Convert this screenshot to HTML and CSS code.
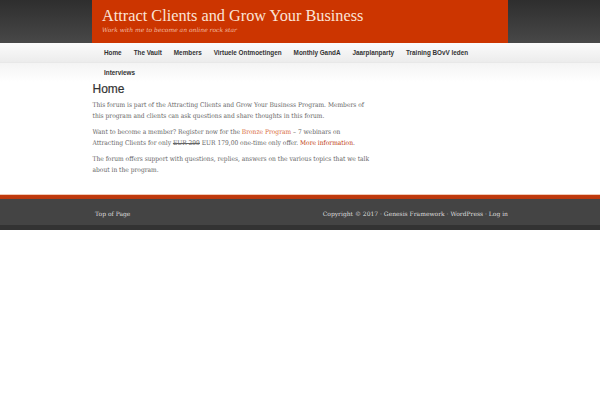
FILE: index.html
```html
<!DOCTYPE html>
<html lang="en">
<head>
    <meta charset="UTF-8">
    <meta name="viewport" content="width=device-width, initial-scale=1.0">
    <title>Home - Attract Clients and Grow Your Business</title>
    <link rel="stylesheet" href="styles.css">
</head>
<body>
    <header class="site-header">
        <div class="wrap title-area">
            <p class="site-title">Attract Clients and Grow Your Business</p>
            <p class="site-description">Work with me to become an online rock star</p>
        </div>
    </header>

    <nav class="nav-primary">
        <ul class="wrap menu">
            <li><a href="#">Home</a></li>
            <li><a href="#">The Vault</a></li>
            <li><a href="#">Members</a></li>
            <li><a href="#">Virtuele Ontmoetingen</a></li>
            <li><a href="#">Monthly GandA</a></li>
            <li><a href="#">Jaarplanparty</a></li>
            <li><a href="#">Training BOvV leden</a></li>
            <li><a href="#">Interviews</a></li>
        </ul>
    </nav>

    <main class="wrap content">
        <article class="entry">
            <h1 class="entry-title">Home</h1>
            <p>This forum is part of the Attracting Clients and Grow Your Business Program. Members of this program and clients can ask questions and share thoughts in this forum.</p>
            <p>Want to become a member? Register now for the <a href="#" class="light">Bronze Program</a> &ndash; 7 webinars on Attracting Clients for only <del>EUR 299</del> EUR 179,00 one-time only offer. <a href="#">More information</a>.</p>
            <p>The forum offers support with questions, replies, answers on the various topics that we talk about in the program.</p>
        </article>
    </main>

    <footer class="site-footer">
        <div class="wrap footer-row">
            <a href="#">Top of Page</a>
            <span>Copyright &copy; 2017 &middot; <a href="#">Genesis Framework</a> &middot; <a href="#">WordPress</a> &middot; <a href="#">Log in</a></span>
        </div>
    </footer>
</body>
</html>
```

FILE: styles.css
```css
/* Reset some default styles */
body, h1, p, ul, li {
    margin: 0;
    padding: 0;
}

body {
    font-family: "DejaVu Serif", serif;
    background-color: #fff;
    color: #555;
}

a {
    text-decoration: none;
}

.wrap {
    width: 416px;
    margin: 0 auto;
}

/* Header */
.site-header {
    background: linear-gradient(#2e2e2e, #484848);
    height: 43px;
}

.title-area {
    background-color: #cc3500;
    height: 43px;
    box-sizing: border-box;
    padding: 6px 0 0 10px;
}

.site-title {
    font-family: "Liberation Serif", serif;
    font-size: 16.3px;
    line-height: 19px;
    color: #fbe3d6;
}

.site-description {
    font-family: "DejaVu Serif", serif;
    font-style: italic;
    font-size: 6px;
    line-height: 9px;
    color: #f3bca2;
}

/* Navigation */
.nav-primary {
    background: linear-gradient(#fbfbfb, #ececec 19px, #dcdcdc 19px, #f4f4f4 20px, #ffffff 39px);
    height: 39px;
}

.menu {
    list-style: none;
    display: flex;
    flex-wrap: wrap;
    box-sizing: border-box;
    padding-right: 36px;
}

.menu li {
    height: 19px;
    margin-bottom: 1px;
}

.menu a {
    display: block;
    padding: 0 6px 0 12px;
    margin-right: -6px;
    font-family: "Liberation Sans", Arial, sans-serif;
    font-weight: bold;
    font-size: 6.35px;
    line-height: 19px;
    color: #333;
}

/* Content */
.content {
    padding: 0 0 0 1px;
}

.entry {
    width: 280px;
}

.entry-title {
    font-family: "Liberation Sans", Arial, sans-serif;
    font-weight: normal;
    font-size: 12px;
    line-height: 14px;
    color: #333;
    margin-bottom: 4px;
    -webkit-text-stroke: 0.2px #333;
}

.entry p {
    font-family: "DejaVu Serif Condensed", "DejaVu Serif", serif;
    font-size: 6.6px;
    line-height: 11px;
    margin-bottom: 5px;
    color: #666;
}

.entry a {
    color: #c03a10;
}

.entry a.light {
    color: #d86a3a;
}

/* Footer */
.site-footer {
    border-top: 1px solid #f1c9b6;
    background: linear-gradient(#c33a0c, #b8380e 4px, #444 4px, #444 30px, #333 30px);
    height: 35px;
    margin-top: 18px;
}

.footer-row {
    display: flex;
    justify-content: space-between;
    padding: 14px 0 0 3px;
    box-sizing: border-box;
    font-size: 6px;
    line-height: 10px;
    color: #ddd;
}

.footer-row a {
    color: #ddd;
}
```
